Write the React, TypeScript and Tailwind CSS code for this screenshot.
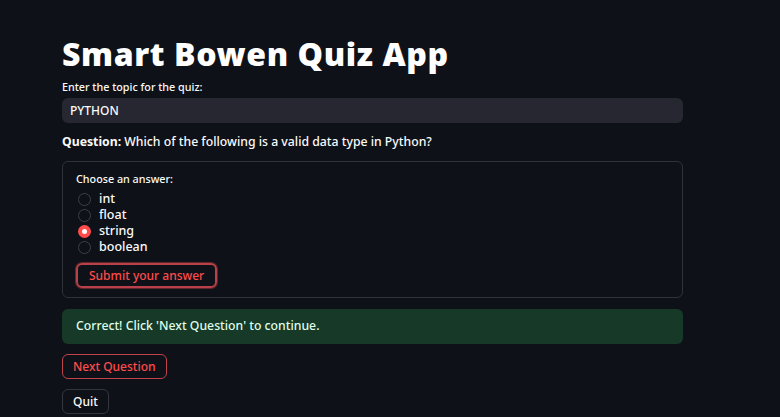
import React, { useState } from 'react';

const options = ['int', 'float', 'string', 'boolean'];

export default function App() {
  const [topic, setTopic] = useState('PYTHON');
  const [choice, setChoice] = useState('string');

  return (
    <div className="min-h-[417px] w-full bg-[#0e1117] text-[#fafafa] font-medium" style={{ fontFamily: '"Noto Sans", "Open Sans", sans-serif' }}>
      <div className="w-[621px] ml-[62px] pt-[34px]">
        <h1 className="text-[32px] leading-[40px] font-black text-white tracking-[0.6px]">Smart Bowen Quiz App</h1>

        <label className="block mt-[6px] text-[10.75px] leading-[14px] text-[#fafafa]">Enter the topic for the quiz:</label>
        <input
          value={topic}
          onChange={(e) => setTopic(e.target.value)}
          className="mt-[4px] w-full h-[25px] rounded-md bg-[#262730] px-[8px] text-[12px] font-medium text-[#fafafa] outline-none"
        />

        <p className="mt-[10px] text-[12.25px] leading-[18px]">
          <span className="font-bold">Question:</span> Which of the following is a valid data type in Python?
        </p>

        <div className="mt-[10px] h-[137px] rounded-md border border-[#30323b] px-[13px] pt-[10px]">
          <div className="text-[10.75px] leading-[14px]">Choose an answer:</div>
          <div className="mt-[5px] flex flex-col">
            {options.map((o) => (
              <label key={o} className="flex items-center h-[16px] gap-[8px] cursor-pointer" onClick={() => setChoice(o)}>
                <span
                  className={
                    choice === o
                      ? 'ml-[2px] w-[13px] h-[13px] rounded-full bg-[#ff4b4b] flex items-center justify-center'
                      : 'ml-[2px] w-[13px] h-[13px] rounded-full border border-[#3d404a]'
                  }
                >
                  {choice === o && <span className="w-[5px] h-[5px] rounded-full bg-white" />}
                </span>
                <span className="text-[12.5px] leading-[16px]">{o}</span>
              </label>
            ))}
          </div>
          <button className="mt-[8px] h-[25px] px-[11px] rounded-md border-2 border-[#b9414a] shadow-[0_0_0_1px_rgba(255,75,75,0.35)] text-[12px] font-medium text-[#ff4b4b]">
            Submit your answer
          </button>
        </div>

        <div className="mt-[11px] h-[35px] rounded-md bg-[#173928] px-[14px] flex items-center text-[12.25px] text-[#dffde9]">
          Correct! Click 'Next Question' to continue.
        </div>

        <button className="mt-[10px] block h-[25px] px-[10px] rounded-md border border-[#c0424a] text-[12px] font-medium text-[#ff4b4b]">
          Next Question
        </button>
        <button className="mt-[10px] block h-[25px] px-[10px] rounded-md border border-[#34363f] text-[12px] font-medium text-[#fafafa]">
          Quit
        </button>
      </div>
    </div>
  );
}
